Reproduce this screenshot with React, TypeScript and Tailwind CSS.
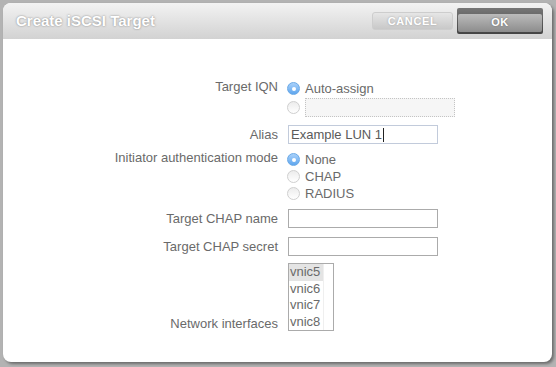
import React from "react";

const font = { fontFamily: '"Liberation Sans", Arial, sans-serif' };

const Radio = ({ checked }: { checked?: boolean }) => (
    <span
        className={`relative inline-block w-[13px] h-[13px] shrink-0 rounded-full ${checked
            ? "bg-gradient-to-b from-[#a9d1fa] to-[#5ea6ee] border border-[#6aa9e6]"
            : "bg-gradient-to-b from-[#ececec] to-white border border-[#cfcfcf]"}`}
    >
        {checked && <span className="absolute left-1/2 top-1/2 w-[4px] h-[4px] -ml-[2px] -mt-[2px] rounded-full bg-white" />}
    </span>
);

const RadioLine = ({ checked, label }: { checked?: boolean; label: string }) => (
    <div className="flex items-center h-[17px] gap-[5px]">
        <Radio checked={checked} />
        <span className="leading-[17px]">{label}</span>
    </div>
);

const TextBox = ({ value, focused }: { value?: string; focused?: boolean }) => (
    <div className={`ml-[1px] w-[150px] h-[19px] border bg-white px-[2px] leading-[17px] text-[#5a5a5a] flex items-center ${focused ? "border-[#c2cbdb]" : "border-[#ababab]"}`}>
        {value}
        {focused && <span className="inline-block w-[1px] h-[14px] bg-[#222] ml-[1px]" />}
    </div>
);

export default function App() {
    return (
        <div className="w-[556px] h-[367px] bg-[#b3b3b3] pt-[3px] pl-[3px] overflow-hidden" style={font}>
            <div className="w-[549px] h-[359px] rounded-[8px] bg-white overflow-hidden shadow-[2px_2px_3px_rgba(0,0,0,0.4)]">
                {/* header */}
                <div className="h-[36px] flex items-center justify-between pl-[13px] pr-[9px] bg-gradient-to-b from-[#f3f3f3] to-[#d2d2d2]">
                    <h1 className="text-[15px] font-bold text-white [text-shadow:0_0_2px_#7a7a7a]">Create iSCSI Target</h1>
                    <div className="flex items-center gap-[4px]">
                        <button className="w-[81px] h-[18px] rounded-[3px] bg-gradient-to-b from-[#e6e6e6] to-[#c8c8c8] border border-[#cdcdcd] text-white text-[11px] font-bold tracking-[0.6px] leading-none [text-shadow:0_0_2px_#999]">
                            CANCEL
                        </button>
                        <div className="p-[1px] bg-gradient-to-b from-[#777] to-[#444] rounded-[2px]">
                            <button className="w-[84px] h-[18px] rounded-[2px] bg-gradient-to-b from-[#bbbbbb] to-[#8d8d8d] text-white text-[11px] font-bold tracking-[0.6px] leading-none [text-shadow:0_0_2px_#666]">
                                OK
                            </button>
                        </div>
                    </div>
                </div>

                {/* form */}
                <div className="pt-[41px] text-[13px] text-[#6a6a6a]">
                    <div className="flex items-start gap-[9px]">
                        <label className="w-[275px] text-right leading-[17px] -mt-[2px]">Target IQN</label>
                        <div className="flex flex-col gap-[1px]">
                            <RadioLine checked label="Auto-assign" />
                            <div className="flex items-center gap-[5px]">
                                <Radio />
                                <div className="w-[150px] h-[19px] border border-dotted border-[#c4c4c4] bg-[#f6f6f6]" />
                            </div>
                        </div>
                    </div>

                    <div className="flex items-start gap-[9px] mt-[8px]">
                        <label className="w-[275px] text-right leading-[17px] pt-[1px]">Alias</label>
                        <TextBox value="Example LUN 1" focused />
                    </div>

                    <div className="flex items-start gap-[9px] mt-[7px]">
                        <label className="w-[275px] text-right leading-[17px] -mt-[2px]">Initiator authentication mode</label>
                        <div className="flex flex-col">
                            <RadioLine checked label="None" />
                            <RadioLine label="CHAP" />
                            <RadioLine label="RADIUS" />
                        </div>
                    </div>

                    <div className="flex items-start gap-[9px] mt-[7px]">
                        <label className="w-[275px] text-right leading-[17px] pt-[1px]">Target CHAP name</label>
                        <TextBox />
                    </div>

                    <div className="flex items-start gap-[9px] mt-[9px]">
                        <label className="w-[275px] text-right leading-[17px] pt-[1px]">Target CHAP secret</label>
                        <TextBox />
                    </div>

                    <div className="flex items-end gap-[9px] mt-[7px]">
                        <label className="w-[275px] text-right leading-[17px] -mb-[1px]">Network interfaces</label>
                        <div className="ml-[1px] w-[46px] h-[68px] border border-[#ababab] bg-white flex">
                            <ul className="w-[34px]">
                                {["vnic5", "vnic6", "vnic7", "vnic8"].map((n, i) => (
                                    <li key={n} className={`h-[16.5px] leading-[16.5px] pl-[1px] ${i === 0 ? "bg-[#e4e4e4]" : ""}`}>{n}</li>
                                ))}
                            </ul>
                            <div className="flex-1 border-l border-[#efefef]" />
                        </div>
                    </div>
                </div>
            </div>
        </div>
    );
}
